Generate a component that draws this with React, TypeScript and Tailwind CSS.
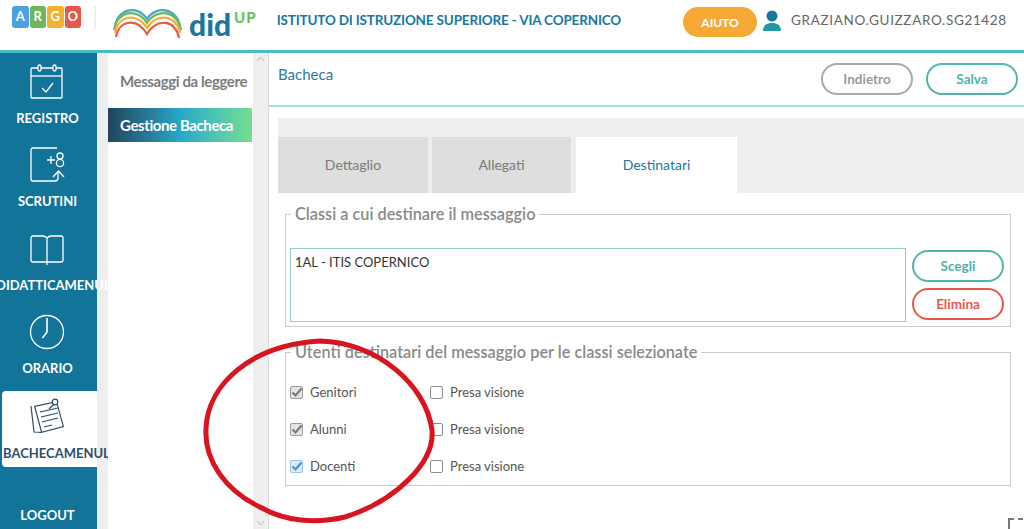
import React from "react";

const font = { fontFamily: "Lato, 'Liberation Sans', sans-serif" };

function Cal() {
  return (
    <svg width="36" height="36" viewBox="0 0 36 36" fill="none" stroke="#fff" strokeWidth="1.3">
      <path d="M5 4h27a1 1 0 0 1 1 1v28a1 1 0 0 1-1 1H3a1 1 0 0 1-1-1V5a1 1 0 0 1 1-1z" />
      <path d="M2 12h31" />
      <rect x="9" y="1" width="3" height="6" rx="1.5" fill="#13749a" />
      <rect x="24" y="1" width="3" height="6" rx="1.5" fill="#13749a" />
      <path d="M13 24l4 4 7-9" />
    </svg>
  );
}
function Scr() {
  return (
    <svg width="36" height="36" viewBox="0 0 36 36" fill="none" stroke="#fff" strokeWidth="1.3">
      <path d="M28 1H4a2 2 0 0 0-2 2v29a2 2 0 0 0 2 2h22a3 3 0 0 0 3-3v-6" />
      <path d="M18 13h8M22 9v8" />
      <circle cx="31" cy="9" r="3" />
      <circle cx="31" cy="16" r="3.6" />
      <path d="M24 30l5.500-6 5.500 6" />
    </svg>
  );
}
function Book() {
  return (
    <svg width="36" height="36" viewBox="0 0 36 36" fill="none" stroke="#fff" strokeWidth="1.3">
      <path d="M18 7c-1-1-2-2-4-2H4a2 2 0 0 0-2 2v22a2 2 0 0 0 2 2h14M18 7c1-1 2-2 4-2h10a2 2 0 0 1 2 2v22a2 2 0 0 1-2 2H18M18 7v27" />
    </svg>
  );
}
function Clock() {
  return (
    <svg width="36" height="36" viewBox="0 0 36 36" fill="none" stroke="#fff" strokeWidth="1.3">
      <circle cx="18" cy="18" r="16.500" />
      <path d="M18 4v14M18 18l-4.500 6" strokeWidth="1.600" />
    </svg>
  );
}
function Note() {
  return (
    <svg width="36" height="36" viewBox="0 0 36 36" fill="none" stroke="#2c4f6b" strokeWidth="1.2">
      <path d="M5 8l22-4 6 25-22 5z" fill="#fff" transform="rotate(-2 18 18)" />
      <path d="M1 8l3 26 8 .5" />
      <path d="M10 14l18-4M11 19l17-4M12 24l16-4M14 29l8-2" />
      <circle cx="25" cy="4" r="2.800" fill="#fff" />
      <path d="M24 6l-5 5" />
    </svg>
  );
}

function NavItem({ icon, label, active, wide }: { icon: React.ReactNode; label: string; active?: boolean; wide?: boolean }) {
  return (
    <div
      className={
        active
          ? "relative z-10 mt-[3.500px] flex h-[76px] w-[95px] ml-[2px] flex-col items-center rounded-l-[4px] bg-white"
          : "relative z-10 flex h-[83.500px] w-[97px] flex-col items-center"
      }
    >
      <div className={active ? "mt-[7px] mr-[4px] h-[36px] w-[36px]" : "mt-[10px] mr-[3px] h-[36px] w-[36px]"}>{icon}</div>
      <div
        className={
          active
            ? "mt-[11px] text-[13px] leading-[16px] font-bold whitespace-nowrap text-[#2c4f6b] self-start pl-px"
            : wide
              ? "mt-[10px] self-start -ml-[4px] text-[13px] leading-[16px] font-bold whitespace-nowrap text-white"
              : "mt-[10px] flex justify-center w-full pr-[2px] text-[13px] leading-[16px] font-bold whitespace-nowrap text-white"
        }
      >
        {label}
      </div>
    </div>
  );
}

function Check({ on, blue }: { on?: boolean; blue?: boolean }) {
  return (
    <span
      className={
        "flex h-[13px] w-[13px] items-center justify-center rounded-[2px] border " +
        (blue ? "border-[#9cc4e4] bg-[#dcebf7]" : on ? "border-[#9a9a9a] bg-[#e4e4e4]" : "border-[#8f8f8f] bg-white")
      }
    >
      {on && (
        <svg width="13" height="13" viewBox="0 0 13 13" fill="none" className="overflow-visible">
          <path d="M2.500 6.500l3 3 6-7" stroke={blue ? "#4a90d9" : "#7b7b7b"} strokeWidth="2.200" />
        </svg>
      )}
    </span>
  );
}

function Row({ label, blue }: { label: string; blue?: boolean }) {
  return (
    <div className="flex h-[37px] items-center text-[13px] text-[#555]">
      <Check on blue={blue} />
      <span className="ml-[7px] w-[120px]">{label}</span>
      <Check />
      <span className="ml-[7px]">Presa visione</span>
    </div>
  );
}

function Pill({ label, cls }: { label: string; cls: string }) {
  return (
    <button className={"flex h-[32px] w-[92px] items-center justify-center rounded-full border-2 bg-white text-[13.500px] font-bold " + cls}>
      {label}
    </button>
  );
}

export default function App() {
  return (
    <div style={font} className="relative h-[529px] w-[1024px] overflow-hidden bg-white">
      <header className="flex h-[53px] items-start border-b-[3px] border-[#4db8c6]">
        <div className="ml-[12px] mt-[6px] flex gap-[1px]">
          {[
            ["A", "#4aa3e0"],
            ["R", "#6fb65a"],
            ["G", "#f4b12f"],
            ["O", "#e8574a"],
          ].map(([l, c]) => (
            <span
              key={l}
              style={{ backgroundColor: c }}
              className="flex h-[22px] w-[16.500px] items-center justify-center rounded-[3px] text-[13px] font-bold text-white"
            >
              {l}
            </span>
          ))}
        </div>
        <div className="ml-[13px] mt-[6px] h-[23px] w-[2px] bg-[#eee]" />
        <svg width="70" height="34" viewBox="0 0 70 34" fill="none" strokeWidth="2.200" className="ml-[17px] mt-[5px]">
          <path d="M2 22C4 4 24 -1 34 14C44 -1 65 4 67 22" stroke="#46a6cf" />
          <path d="M1 25C4 6 24 2 34 18C44 2 65 6 68 25" stroke="#6fb65a" />
          <path d="M2 28C5 10 24 7 34 23C44 7 64 10 67 28" stroke="#f4b12f" />
          <path d="M3 32C6 15 24 12 34 29C44 12 63 15 66 33" stroke="#e8574a" />
        </svg>
        <span className="ml-[6px] mt-[7px] text-[30px] leading-[34px] font-black text-[#1a779f]">did</span>
        <span className="ml-[3px] mt-[9px] text-[15px] leading-[16px] font-black tracking-[1px] text-[#63c25c]">UP</span>
        <span className="ml-[20px] mt-[11px] text-[13.500px] leading-[18px] font-bold tracking-[-0.17px] whitespace-nowrap text-[#1a779f]">
          ISTITUTO DI ISTRUZIONE SUPERIORE - VIA COPERNICO
        </span>
        <span className="ml-[62px] mt-[7px] flex h-[30px] w-[74px] flex-none items-center justify-center rounded-full bg-[#f7a935] pt-[2px] text-[12px] font-bold text-white">
          AIUTO
        </span>
        <svg width="20" height="22" viewBox="0 0 20 22" className="ml-[5px] mt-[10px] flex-none">
          <circle cx="10" cy="6" r="5.500" fill="#1a779f" />
          <path d="M1 21c0-6 4-8 9-8s9 2 9 8z" fill="#2397a8" />
        </svg>
        <span className="ml-[9px] mt-[11px] text-[13.500px] leading-[18px] tracking-[0.65px] whitespace-nowrap text-[#666]">
          GRAZIANO.GUIZZARO.SG21428
        </span>
      </header>

      <div className="flex h-[476px]">
        <nav className="flex w-[97px] flex-none flex-col bg-[#13749a] pt-[0.500px]">
          <NavItem icon={<Cal />} label="REGISTRO" />
          <NavItem icon={<Scr />} label="SCRUTINI" />
          <NavItem wide icon={<Book />} label="DIDATTICAMENUL" />
          <NavItem icon={<Clock />} label="ORARIO" />
          <NavItem active icon={<Note />} label="BACHECAMENULA" />
          <div className="mt-[40px] flex justify-center pr-[2px] text-[13px] leading-[16px] font-bold text-white">LOGOUT</div>
        </nav>

        <div className="w-[11px] flex-none bg-[#eeeeee]" />

        <aside className="relative z-20 w-[145px] flex-none bg-white pt-[19px]">
          <div className="pl-[12px] text-[15px] leading-[18px] font-bold tracking-[-0.4px] whitespace-nowrap text-[#7d7d7d]">Messaggi da leggere</div>
          <div className="mt-[18px] mr-px flex h-[34px] items-center bg-gradient-to-r from-[#1f4560] via-[#26a8c8] to-[#73df8f] pl-[12px] text-[15px] font-bold tracking-[-0.4px] whitespace-nowrap text-white">
            Gestione Bacheca
          </div>
        </aside>

        <div className="flex w-[16px] flex-none flex-col items-center justify-between border-r border-[#d9d9d9] bg-[#eeeeee] py-[3px]">
          <svg width="9" height="6" viewBox="0 0 9 6" fill="none" stroke="#b5b5b5"><path d="M1 5l3.500-4 3.500 4" /></svg>
          <svg width="9" height="6" viewBox="0 0 9 6" fill="none" stroke="#b5b5b5"><path d="M1 1l3.500 4 3.500-4" /></svg>
        </div>

        <main className="min-w-0 flex-1">
          <div className="flex h-[54px] items-start justify-between border-b-2 border-[#a5dde0] pl-[9px] pr-[6px]">
            <span className="mt-[12px] text-[15px] leading-[18px] text-[#2b7a9e]">Bacheca</span>
            <div className="mt-[10px] flex gap-[13px]">
              <Pill label="Indietro" cls="border-[#a9a9a9] text-[#9a9a9a]" />
              <Pill label="Salva" cls="border-[#52b5ac] text-[#4db3aa]" />
            </div>
          </div>

          <div className="ml-[9px] mt-[11px] flex h-[75px] items-end gap-[4px] bg-[#eeeeee]">
            <div className="flex h-[56px] w-[150px] items-center justify-center bg-[#dedede] pb-[2px] text-[14px] text-[#7a7a7a]">Dettaglio</div>
            <div className="flex h-[56px] w-[139px] items-center justify-center bg-[#dedede] pb-[2px] text-[14px] text-[#7a7a7a]">Allegati</div>
            <div className="ml-px flex h-[56px] w-[161px] items-center justify-center bg-white pb-[2px] text-[14px] text-[#1a779f]">Destinatari</div>
          </div>

          <fieldset className="mt-[11px] ml-[16px] mr-[13px] h-[123px] border border-[#cccccc] px-[4px]">
            <legend className="ml-px px-[4px] text-[16.300px] leading-[20px] font-semibold text-[#8a8a8a]">
              Classi a cui destinare il messaggio
            </legend>
            <div className="mt-[24px] flex items-start">
              <div className="h-[74px] w-[616px] border border-[#8fd0cd] px-[4px] py-[5px] text-[13px] leading-[16px] text-[#333]">
                1AL - ITIS COPERNICO
              </div>
              <div className="ml-[6px] mt-[2px] flex flex-col gap-[6px]">
                <Pill label="Scegli" cls="border-[#52b5ac] text-[#4db3aa]" />
                <Pill label="Elimina" cls="border-[#e8574a] text-[#e8574a]" />
              </div>
            </div>
          </fieldset>

          <fieldset className="mt-[15px] ml-[16px] mr-[13px] h-[144px] border border-[#cccccc] pl-[4px]">
            <legend className="ml-px px-[4px] text-[16.300px] leading-[20px] font-semibold text-[#8a8a8a]">
              Utenti destinatari del messaggio per le classi selezionate
            </legend>
            <div className="mt-[12px]">
              <Row label="Genitori" />
              <Row label="Alunni" />
              <Row label="Docenti" blue />
            </div>
          </fieldset>
        </main>
      </div>

      <svg width="244" height="194" viewBox="198 335 244 194" fill="none" className="absolute left-[198px] top-[335px] z-30">
        <path
          d="M320 341C378 343 426 385 432 430C435 462 396 501 345 517C315 524 285 521 262 508C225 491 204 460 206 428C208 385 250 345 320 341Z"
          stroke="#d8141f"
          strokeWidth="5"
        />
      </svg>

      <svg width="16" height="12" viewBox="0 0 16 12" fill="none" className="absolute left-[1008px] top-[517px] z-30" stroke="#777" strokeWidth="2">
        <path d="M1 12V2h5M10 2h5" />
      </svg>
    </div>
  );
}
